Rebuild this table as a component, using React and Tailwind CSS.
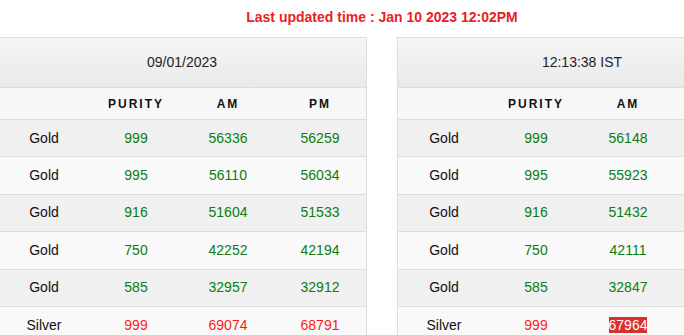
const left = [
  ['Gold', '999', '56336', '56259'],
  ['Gold', '995', '56110', '56034'],
  ['Gold', '916', '51604', '51533'],
  ['Gold', '750', '42252', '42194'],
  ['Gold', '585', '32957', '32912'],
  ['Silver', '999', '69074', '68791'],
];

// PM column of the second table falls outside the window
const right = [
  ['Gold', '999', '56148', ''],
  ['Gold', '995', '55923', ''],
  ['Gold', '916', '51432', ''],
  ['Gold', '750', '42111', ''],
  ['Gold', '585', '32847', ''],
  ['Silver', '999', '67964', ''],
];

function RateTable({ title, rows, flash, showPm = true }) {
  return (
    <div className="w-[370px] shrink-0 border-x border-t border-[#dddddd]">
      {/* header */}
      <div className="h-[50px] flex items-center justify-center border-b border-[#dddddd] bg-gradient-to-b from-[#f6f6f6] to-[#e9e9e9] text-[14px] text-[#222]">
        {title}
      </div>
      <div className="h-[32px] grid grid-cols-4 items-center border-b border-[#dddddd] bg-[#f7f7f7] text-[12px] font-bold tracking-[2px] text-[#111] text-center">
        <span></span>
        <span>PURITY</span>
        <span>AM</span>
        <span>{showPm ? 'PM' : ''}</span>
      </div>
      {rows.map((r, i) => {
        const silver = r[0] === 'Silver';
        const val = silver ? 'text-[#ff1a1a]' : 'text-[#0b7d13]';
        return (
          <div
            key={i}
            className={`h-[37.4px] grid grid-cols-4 items-center text-center text-[14px] border-b border-[#dddddd] ${i % 2 === 0 ? 'bg-[#f0f0f0]' : 'bg-[#f9f9f9]'}`}
          >
            <span className="text-[#111]">{r[0]}</span>
            <span className={val}>{r[1]}</span>
            <span className={val}>
              {flash && silver ? (
                <span className="bg-[#d8302c] text-white">{r[2]}</span>
              ) : (
                r[2]
              )}
            </span>
            <span className={val}>{r[3]}</span>
          </div>
        );
      })}
    </div>
  );
}

export default function App() {
  return (
    <div className="w-[684px] h-[335px] overflow-hidden bg-white font-['Liberation_Sans',Arial,sans-serif]">
      <div className="ml-[-3px] w-[770px]">
        <div className="h-[37px] flex items-center justify-center pb-[2px] text-[14px] font-bold text-[#ec1c24]">
          Last updated time : Jan 10 2023 12:02PM
        </div>
        <div className="flex gap-[30px]">
          <RateTable title="09/01/2023" rows={left} />
          <RateTable title="12:13:38 IST" rows={right} flash showPm={false} />
        </div>
      </div>
    </div>
  );
}
